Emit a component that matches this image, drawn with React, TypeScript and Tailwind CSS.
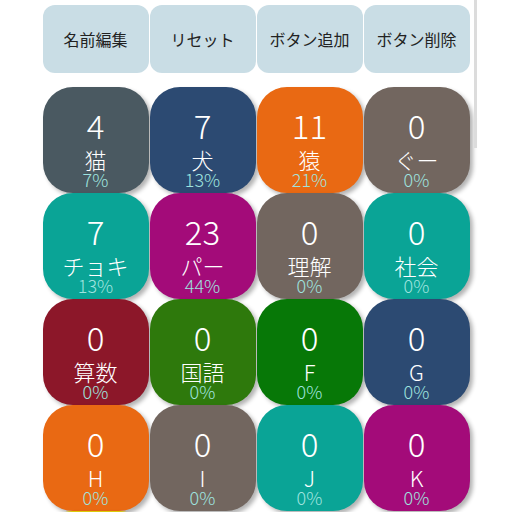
import React from "react";

type Tile = { count: number; label: string; pct: string; color: string };

const ACTIONS = ["名前編集", "リセット", "ボタン追加", "ボタン削除"];

const TILES: Tile[] = [
  { count: 4, label: "猫", pct: "7%", color: "bg-[#4a5961]" },
  { count: 7, label: "犬", pct: "13%", color: "bg-[#2c4a72]" },
  { count: 11, label: "猿", pct: "21%", color: "bg-[#e96913]" },
  { count: 0, label: "ぐー", pct: "0%", color: "bg-[#72665f]" },
  { count: 7, label: "チョキ", pct: "13%", color: "bg-[#0aa496]" },
  { count: 23, label: "パー", pct: "44%", color: "bg-[#a30b79]" },
  { count: 0, label: "理解", pct: "0%", color: "bg-[#72665f]" },
  { count: 0, label: "社会", pct: "0%", color: "bg-[#0aa496]" },
  { count: 0, label: "算数", pct: "0%", color: "bg-[#8c1729]" },
  { count: 0, label: "国語", pct: "0%", color: "bg-[#2e790c]" },
  { count: 0, label: "F", pct: "0%", color: "bg-[#077807]" },
  { count: 0, label: "G", pct: "0%", color: "bg-[#2c4a72]" },
  { count: 0, label: "H", pct: "0%", color: "bg-[#e96913]" },
  { count: 0, label: "I", pct: "0%", color: "bg-[#72665f]" },
  { count: 0, label: "J", pct: "0%", color: "bg-[#0aa496]" },
  { count: 0, label: "K", pct: "0%", color: "bg-[#a30b79]" },
  { count: 0, label: "L", pct: "0%", color: "bg-[#dccb0a]" },
];

function CounterTile({ t }: { t: Tile }) {
  return (
    <button
      className={`${t.color} h-[106px] w-[106px] rounded-[30px] shadow-[3px_3px_4px_rgba(0,0,0,0.3)] flex flex-col items-center pt-[22px] text-white`}
    >
      <span className="text-[33px] leading-[33px] font-light">{t.count}</span>
      <span className="mt-[7px] text-[22px] leading-[21px] font-light">
        {t.label}
      </span>
      <span className="text-[18px] leading-[18px] font-light text-[#9ee3df]">
        {t.pct}
      </span>
    </button>
  );
}

export default function App() {
  return (
    <div
      className="relative h-[512px] w-[512px] overflow-hidden bg-white"
      style={{ fontFamily: '"Noto Sans CJK JP", "Noto Sans", sans-serif' }}
    >
      <div className="mx-auto w-[427px] pt-[5px]">
        <div className="grid grid-cols-4 gap-px">
          {ACTIONS.map((a) => (
            <button
              key={a}
              className="h-[68px] rounded-[12px] bg-[#c9dde5] text-[16px] text-[#222]"
            >
              {a}
            </button>
          ))}
        </div>

        <div className="mt-[14px] grid grid-cols-4 gap-x-px">
          {TILES.map((t, i) => (
            <CounterTile key={i} t={t} />
          ))}
        </div>
      </div>

      {/* scroll indicator */}
      <div className="absolute left-[474px] top-0 h-[148px] w-[3px] bg-[#dcdcdc]" />
    </div>
  );
}
